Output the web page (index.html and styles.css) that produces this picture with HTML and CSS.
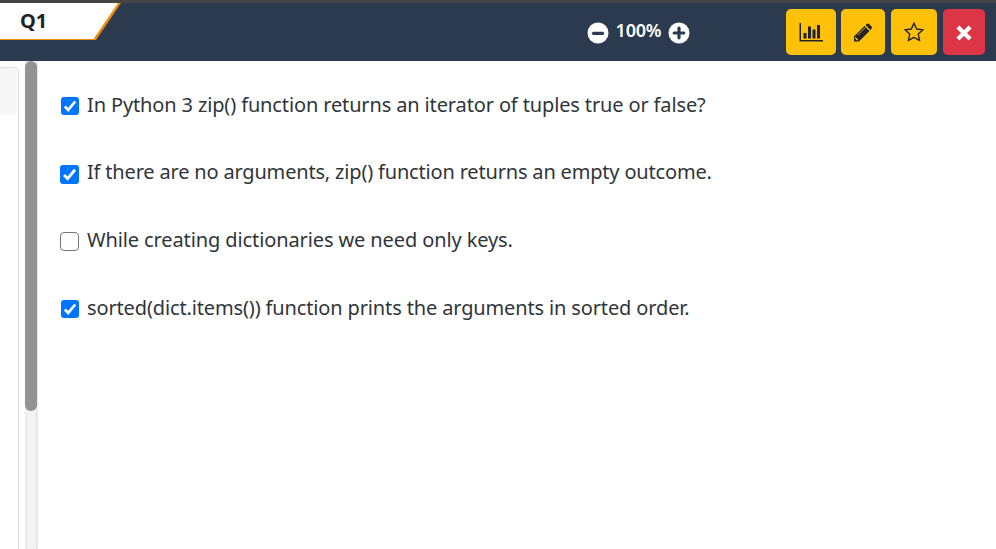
FILE: index.html
```
<!DOCTYPE html>
<html lang="en">
<head>
<meta charset="utf-8">
<title>Q1</title>
<link rel="stylesheet" href="styles.css">
</head>
<body>
<header class="topbar">
  <div class="tab"><svg class="tab-shape" width="122" height="38" viewBox="0 0 122 38"><path d="M0 0H121L96 37H0Z" fill="#f28c0c"/><path d="M0 0H118L93.500 36H0Z" fill="#fff"/></svg><span class="tab-label">Q1</span></div>
  <div class="zoom">
    <svg width="22" height="22" viewBox="0 0 22 22"><circle cx="11" cy="11" r="10.500" fill="#fff"/><path d="M6.500 11.300H15.500" stroke="#2c3a50" stroke-width="3.200" stroke-linecap="round"/></svg>
    <span class="zoom-value">100%</span>
    <svg width="22" height="22" viewBox="0 0 22 22"><circle cx="11" cy="11" r="10.500" fill="#fff"/><path d="M6.200 11H15.800M11 6.200V15.800" stroke="#2c3a50" stroke-width="3.200" stroke-linecap="round"/></svg>
  </div>
  <div class="actions">
    <button class="btn chart" aria-label="Statistics"><svg width="24" height="20" viewBox="0 0 24 20"><path d="M.500 0H2V17H24V18.600H.500Z M4.500 10H7.500V15.500H4.500Z M9 3.500H12V15.500H9Z M13.500 6.500H16.500V15.500H13.500Z M18 2H21V15.500H18Z" fill="#212529"/></svg></button>
    <button class="btn edit" aria-label="Edit"><svg width="20" height="20" viewBox="0 0 20 20"><path d="M1 13.500 11.500 3 16.500 8 6 18.500H1Z M12.500 2 14 .700Q15 .200 16 1L18.600 3.600Q19.400 4.600 18.600 5.600L17.400 7Z" fill="#212529"/><path d="M2.500 14.500 5 17H4L2.500 15.500ZM4.500 12.300 12 4.800" fill="#ffc107" stroke="#ffc107" stroke-width=".8"/></svg></button>
    <button class="btn star" aria-label="Favourite"><svg width="20" height="20" viewBox="0 0 20 20"><path d="M10 1.200 12.700 7 19 7.800 14.300 12.100 15.500 18.300 10 15.300 4.500 18.300 5.700 12.100 1 7.800 7.300 7Z" fill="none" stroke="#212529" stroke-width="1.400"/></svg></button>
    <button class="btn close" aria-label="Close"><svg width="16" height="16" viewBox="0 0 16 16"><path d="M3.400 3.400 12.600 12.600M12.600 3.400 3.400 12.600" stroke="#fff" stroke-width="4.200" stroke-linecap="square"/></svg></button>
  </div>
</header>
<main class="workspace">
  <aside class="side"><div class="card"><div class="card-head"></div></div></aside>
  <div class="scroll"><div class="thumb"></div></div>
  <section class="options">
    <div class="option"><span class="box checked"><svg viewBox="0 0 18 18"><path d="M3.800 9.500 7.200 12.900 14.200 4.500"/></svg></span><span class="text t1">In Python 3 zip() function returns an iterator of tuples true or false?</span></div>
    <div class="option"><span class="box checked large"><svg viewBox="0 0 18 18"><path d="M3.800 9.500 7.200 12.900 14.200 4.500"/></svg></span><span class="text t2">If there are no arguments, zip() function returns an empty outcome.</span></div>
    <div class="option"><span class="box"></span><span class="text t3">While creating dictionaries we need only keys.</span></div>
    <div class="option"><span class="box checked"><svg viewBox="0 0 18 18"><path d="M3.800 9.500 7.200 12.900 14.200 4.500"/></svg></span><span class="text t4">sorted(dict.items()) function prints the arguments in sorted order.</span></div>
  </section>
</main>
</body>
</html>
```
FILE: styles.css
```
* { box-sizing: border-box; }
body {
  margin: 0;
  height: 549px;
  overflow: hidden;
  background: #fff;
  color: #212529;
  font-family: "Noto Sans", "Open Sans", sans-serif;
}
svg { display: block; }
.topbar {
  height: 61px;
  border-top: 3px solid #454545;
  background: #2c3a50;
  display: flex;
  align-items: flex-start;
}
.tab { position: relative; width: 122px; height: 38px; }
.tab-shape { position: absolute; inset: 0; }
.tab-label {
  position: relative;
  display: block;
  padding-left: 20px;
  font-size: 20px;
  line-height: 36px;
  font-weight: 700;
}
.zoom { display: flex; margin: 19px 0 0 465px; width: 103px; justify-content: space-between; }
.zoom-value {
  color: #fff;
  font-size: 18px;
  font-weight: 600;
  line-height: 17px;
  letter-spacing: -.2px;
}
.actions { display: flex; margin: 6px 11px 0 auto; }
.btn {
  height: 46px;
  padding: 0;
  border: 0;
  border-radius: 5px;
  background: #ffc107;
  display: flex;
  align-items: center;
  justify-content: center;
}
.chart { width: 50px; padding-top: 2px; }
.edit { width: 44px; margin-left: 5px; padding-top: 1px; }
.star { width: 46px; margin-left: 6px; }
.close { width: 42px; margin-left: 6px; background: #dc3545; padding: 2px 1px 0 0; }
.workspace { display: flex; height: 488px; }
.side { width: 25px; padding-top: 6px; }
.card {
  width: 19px;
  height: 500px;
  border: 1px solid #dcdcdc;
  border-left: 0;
  border-radius: 0 5px 0 0;
}
.card-head { width: 17px; height: 47px; background: #f7f7f7; border-radius: 0 4px 0 0; }
.scroll { width: 13px; background: linear-gradient(90deg, #e9e9e9, #f4f4f4 30%, #f4f4f4 70%, #e4e4e4); }
.thumb { width: 12px; height: 350px; border-radius: 6px; background: #929292; }
.options { padding: 28px 0 0 22px; }
.option { display: flex; height: 67.700px; align-items: flex-start; }
.box {
  width: 19px;
  height: 19px;
  margin: 8px 8px 0 0;
  border: 1px solid #767676;
  border-radius: 4px;
  background: #fff;
}
.box.checked { width: 18px; height: 18px; margin: 8px 8px 0 1px; border: 0; border-radius: 3px; background: #0075ff; }
.box.checked.large { width: 19px; height: 19px; margin-left: 0; }
.box path { fill: none; stroke: #fff; stroke-width: 2.700; }
.text { font-size: 20px; line-height: 32px; white-space: nowrap; color: #30353a; }
.t1 { letter-spacing: -.135px; }
.t2 { letter-spacing: -.18px; line-height: 30px; }
.t3 { letter-spacing: -.11px; }
.t4 { letter-spacing: -.14px; }
```
